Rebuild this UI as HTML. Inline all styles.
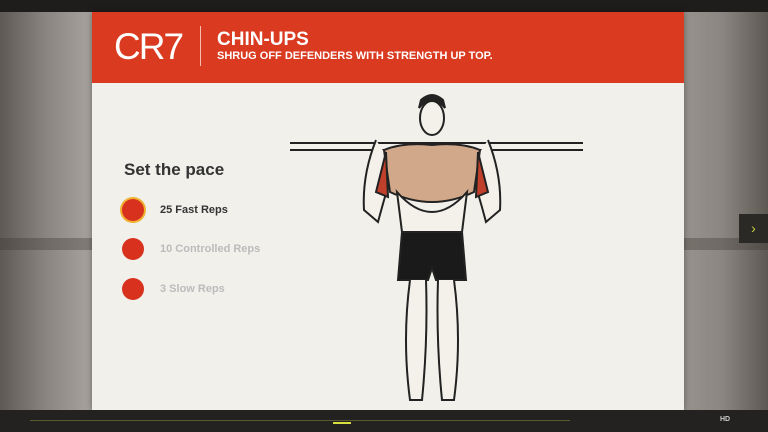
<!DOCTYPE html>
<html><head><meta charset="utf-8"><style>
*{margin:0;padding:0;box-sizing:border-box}
body{width:768px;height:432px;overflow:hidden;position:relative;font-family:"Liberation Sans",sans-serif;background:linear-gradient(90deg,#5e5955 0%,#8a8580 6%,#a8a39e 12%,#9a958f 88%,#8b8681 94%,#5d5853 100%)}
.top{position:absolute;left:0;top:0;width:768px;height:12px;background:#1e1d1b}
.wall{position:absolute;left:0;top:238px;width:768px;height:12px;background:rgba(60,55,50,.35)}
.card{position:absolute;left:92px;top:12px;width:592px;height:398px;background:#f1f0eb;box-shadow:0 0 6px rgba(0,0,0,.4)}
.hdr{position:absolute;left:0;top:0;width:592px;height:71px;background:#d93a20}
.cr7{position:absolute;left:22px;top:14px;color:#fff;font-size:37px;letter-spacing:-2px}
.sep{position:absolute;left:108px;top:14px;width:1px;height:40px;background:#f3c0b0}
.t1{position:absolute;left:125px;top:17px;color:#fff;font-weight:bold;font-size:19px}
.t2{position:absolute;left:125px;top:38px;color:#fff;font-weight:bold;font-size:11px}
.pace{position:absolute;left:32px;top:148px;font-size:17px;font-weight:bold;color:#333}
.it{position:absolute;left:30px;font-size:11px;font-weight:bold;color:#bbb}
.it i{position:absolute;left:0;top:-11px;width:22px;height:22px;border-radius:50%;background:#d8321f}
.it span{position:absolute;left:38px;top:-6px;white-space:nowrap}
.bot{position:absolute;left:0;top:410px;width:768px;height:22px;background:#232220}
.arr{position:absolute;left:739px;top:214px;width:29px;height:29px;background:#2a2926;color:#c8d040;font-size:14px;text-align:center;line-height:29px}
</style></head><body>
<div class="top"></div><div class="wall"></div>
<div class="card">
<div class="hdr"><div class="cr7">CR7</div><div class="sep"></div><div class="t1">CHIN-UPS</div><div class="t2">SHRUG OFF DEFENDERS WITH STRENGTH UP TOP.</div></div>
<div class="pace">Set the pace</div>
<div class="it" style="top:198px;color:#333"><i style="box-shadow:0 0 0 2px #f0b030"></i><span>25 Fast Reps</span></div>
<div class="it" style="top:237px"><i></i><span>10 Controlled Reps</span></div>
<div class="it" style="top:277px"><i></i><span>3 Slow Reps</span></div>
<svg style="position:absolute;left:0;top:0" width="592" height="398">
<g stroke="#222" stroke-width="2" fill="none">
<line x1="198" y1="131" x2="491" y2="131"/><line x1="198" y1="138" x2="491" y2="138"/>
<ellipse cx="340" cy="106" rx="12" ry="17" fill="#f4f1ea"/>
<path d="M327 96 q13-16 26 0 l-2-8 q-11-10-22 0z" fill="#222"/>
<path d="M284 128 q-14 35-12 70 l14 12 q8-30 16-55 M396 128 q14 35 12 70 l-14 12 q-8-30-16-55" fill="#f4f1ea"/>
<path d="M292 138 q20-8 48-5 q28-3 48 5 l-6 42 q-42 20-84 0z" fill="#d1a98a"/>
<path d="M294 140 l-10 40 l12 5z M386 140 l10 40 l-12 5z" fill="#c0402c"/>
<path d="M305 180 q35 40 70 0 l-5 40 h-60z" fill="#f4f1ea"/>
<path d="M310 220 h60 l4 48 h-30 l-4-12 l-4 12 h-30z" fill="#1a1a1a"/>
<path d="M318 268 q-8 60 0 120 h12 q6-60 4-120 M362 268 q8 60 0 120 h-12 q-6-60-4-120" fill="#f4f1ea"/>
</g></svg>
</div>
<div class="arr">&#x203A;</div>
<div class="bot"><div style="position:absolute;left:30px;top:10px;width:540px;height:1px;background:#5a5a30"></div><div style="position:absolute;left:333px;top:12px;width:18px;height:2px;background:#d8e040"></div><div style="position:absolute;left:720px;top:6px;color:#ccc;font-size:7px;font-weight:bold">HD</div></div>
</body></html>
